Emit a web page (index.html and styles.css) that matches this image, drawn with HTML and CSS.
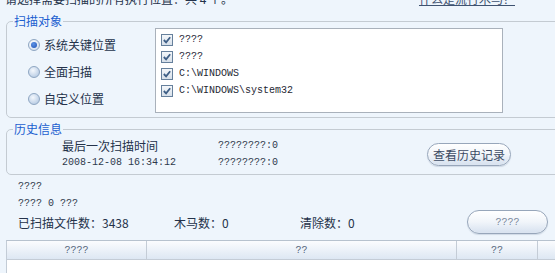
FILE: index.html
```
<!DOCTYPE html>
<html lang="zh-CN">
<head>
    <meta charset="UTF-8">
    <link rel="stylesheet" href="styles.css">
</head>
<body>
    <div class="topbar">
        <span class="top-text">请选择需要扫描的所有执行位置：共 4 个。</span>
        <a class="top-link" href="#">什么是流行木马？</a>
    </div>

    <fieldset class="group scan-group">
        <legend>扫描对象</legend>
        <div class="scan-body">
            <div class="radio-list">
                <label class="radio-row"><span class="radio checked"></span>系统关键位置</label>
                <label class="radio-row"><span class="radio"></span>全面扫描</label>
                <label class="radio-row"><span class="radio"></span>自定义位置</label>
            </div>
            <div class="path-list">
                <div class="path-row"><span class="check"><svg viewBox="0 0 11 11"><path d="M2 5.5 L4.5 8 L9 2.5"/></svg></span>????</div>
                <div class="path-row"><span class="check"><svg viewBox="0 0 11 11"><path d="M2 5.5 L4.5 8 L9 2.5"/></svg></span>????</div>
                <div class="path-row"><span class="check"><svg viewBox="0 0 11 11"><path d="M2 5.5 L4.5 8 L9 2.5"/></svg></span>C:\WINDOWS</div>
                <div class="path-row"><span class="check"><svg viewBox="0 0 11 11"><path d="M2 5.5 L4.5 8 L9 2.5"/></svg></span>C:\WINDOWS\system32</div>
            </div>
        </div>
    </fieldset>

    <fieldset class="group history-group">
        <legend>历史信息</legend>
        <div class="history-body">
            <span class="cn">最后一次扫描时间</span>
            <span class="mono">????????:0</span>
            <button class="pill-button history-button">查看历史记录</button>
            <span class="mono">2008-12-08 16:34:12</span>
            <span class="mono">????????:0</span>
        </div>
    </fieldset>

    <div class="status">
        <div class="status-line mono">????</div>
        <div class="status-line mono">???? 0 ???</div>
        <div class="stats">
            <span>已扫描文件数：3438</span>
            <span>木马数：0</span>
            <span>清除数：0</span>
            <button class="pill-button start-button">????</button>
        </div>
    </div>

    <div class="result-table">
        <div class="head-cell mono">????</div>
        <div class="head-cell mono">??</div>
        <div class="head-cell mono">??</div>
        <div class="head-cell"></div>
    </div>
</body>
</html>
```

FILE: styles.css
```
body {
    margin: 0;
    width: 555px;
    height: 273px;
    overflow: hidden;
    background: #eef5fc;
    color: #24324a;
    font-family: "Noto Sans CJK SC", "Liberation Sans", sans-serif;
    font-size: 12px;
}

.mono {
    font-family: "Liberation Mono", monospace;
    font-size: 10px;
    color: #2e3a4c;
}

/* top line, mostly scrolled out of view */
.topbar {
    display: flex;
    height: 8px;
    overflow: hidden;
    padding-left: 5px;
}
.top-text,
.top-link {
    margin-top: -9px;
    line-height: 16px;
}
.top-link {
    margin-left: auto;
    margin-right: 40px;
    color: #3e5270;
}

/* group boxes */
.group {
    margin: 5px -20px 0 6px;
    padding: 0;
    border: 1px solid #c4cbd2;
    border-radius: 5px;
}
.group legend {
    margin-left: 6px;
    padding: 0 1px;
    line-height: 16px;
    color: #1b5fd0;
}

.scan-body {
    display: flex;
    padding-bottom: 4px;
}
.radio-list {
    display: flex;
    flex-direction: column;
    gap: 10px;
    width: 127px;
    padding: 7px 0 0 21px;
}
.radio-row {
    display: flex;
    align-items: center;
    gap: 4px;
    height: 17px;
}
.radio {
    position: relative;
    width: 10px;
    height: 10px;
    border: 1px solid #8ea6c2;
    border-radius: 50%;
    background: radial-gradient(circle at 40% 35%, #f4f8fd, #a9c1de);
}
.radio.checked {
    background: radial-gradient(circle at 40% 35%, #ffffff, #c9d8ea);
}
.radio.checked::after {
    content: "";
    position: absolute;
    left: 2px;
    top: 2px;
    width: 6px;
    height: 6px;
    border-radius: 50%;
    background: radial-gradient(circle at 40% 35%, #5d93e6, #1f52b4);
}

.path-list {
    width: 341px;
    height: 81px;
    margin-top: -1px;
    padding: 2px 0 0 5px;
    background: #ffffff;
    border: 1px solid #a9b1bb;
}
.path-row {
    display: flex;
    align-items: center;
    gap: 6px;
    height: 17px;
    font-family: "Liberation Mono", monospace;
    font-size: 10px;
    color: #1e2733;
}
.check {
    display: flex;
    width: 10px;
    height: 10px;
    border: 1px solid #66809c;
    background: linear-gradient(#f4f7fa, #d7e0ea);
}
.check svg {
    width: 10px;
    height: 10px;
    fill: none;
    stroke: #3f5f86;
    stroke-width: 2;
}

/* history */
.history-group {
    margin-top: 3px;
}
.history-body {
    display: grid;
    grid-template-columns: 156px 209px 84px;
    grid-template-rows: 17px 17px;
    align-items: center;
    padding: 0 0 3px 55px;
}
.history-body .cn {
    color: #24324a;
}
.history-button {
    grid-column: 3;
    grid-row: 1 / 3;
    height: 23px;
}

/* buttons */
.pill-button {
    border: 1px solid #97a6ba;
    border-radius: 12px;
    background: linear-gradient(#ffffff, #f1f5fa 50%, #d6e1ef);
    box-shadow: inset 0 0 1px #ffffff, 0 1px 1px #d0dae6;
    font-family: "Noto Sans CJK SC", sans-serif;
    font-size: 12px;
    color: #3b4a63;
    padding: 0;
}

/* status area */
.status {
    padding: 3px 0 0 18px;
}
.status-line {
    line-height: 17px;
}
.stats {
    display: grid;
    grid-template-columns: 156px 126px 167px 81px;
    align-items: center;
    height: 24px;
    margin-top: -2px;
}
.start-button {
    height: 24px;
    font-family: "Liberation Mono", monospace;
    font-size: 10px;
    color: #7a889b;
}

/* result table */
.result-table {
    display: grid;
    grid-template-columns: 140px 310px 81px 40px;
    grid-template-rows: 19px;
    margin: 6px 0 0 6px;
    height: 40px;
    background: #ffffff;
    border-top: 1px solid #b7c2ce;
    border-left: 1px solid #c3ccd6;
}
.head-cell {
    display: flex;
    align-items: center;
    justify-content: center;
    background: linear-gradient(#fbfcfe, #dde7f3);
    border-right: 1px solid #c4ccd6;
    border-bottom: 1px solid #c4ccd6;
    color: #56667c;
}
```
